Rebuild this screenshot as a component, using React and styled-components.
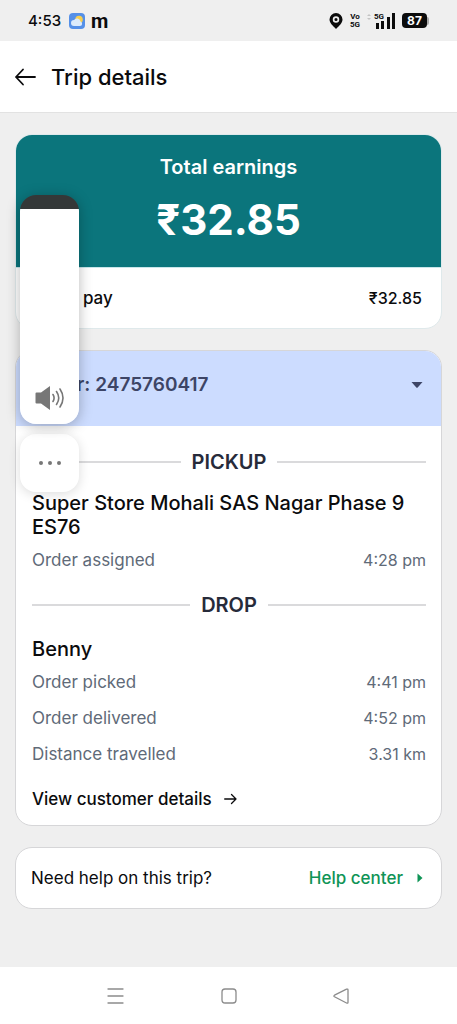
import React, { useState } from 'react';
import styled, { createGlobalStyle } from 'styled-components';

const GlobalStyle = createGlobalStyle`
    *{
        box-sizing:border-box;
    }
    body{
        margin:0;
        background:#efefef;
        font-family:Inter, "Open Sans", sans-serif;
        color:#0b0b0d;
    }
    h1, h2, h3, p, dl, dd{
        margin:0;
    }
    button{
        padding:0;
        border:none;
        background:none;
        font-family:inherit;
        color:inherit;
        cursor:pointer;
    }
    svg{
        display:block;
        flex-shrink:0;
    }
`;

const Page = styled.div`
    display:flex;
    flex-direction:column;
    min-height:100vh;
`;

const StatusBar = styled.div`
    display:flex;
    justify-content:space-between;
    align-items:center;
    height:41px;
    padding:0 28px;
`;

const StatusGroup = styled.div`
    display:flex;
    align-items:center;
    gap:${({ gap }) => gap};
`;

const Clock = styled.span`
    font-size:15px;
    font-weight:500;
    line-height:20px;
    margin-right:2px;
`;

const AppMark = styled.span`
    font-family:Roboto, sans-serif;
    font-size:20px;
    font-weight:700;
    line-height:20px;
`;

const VoLabel = styled.span`
    display:flex;
    flex-direction:column;
    align-items:center;
    font-family:Roboto, sans-serif;
    font-size:8px;
    font-weight:700;
    line-height:8px;
`;

const Signal = styled.div`
    display:flex;
    align-items:flex-end;
    gap:3px;
`;

const SignalStart = styled.div`
    display:flex;
    flex-direction:column;
    align-items:flex-end;
`;

const SignalLabel = styled.span`
    font-family:Roboto, sans-serif;
    font-size:8px;
    font-weight:700;
    line-height:8px;
`;

const Battery = styled.span`
    display:flex;
    align-items:center;
    &::after{
        content:'';
        width:2px;
        height:8px;
        border-radius:0 2px 2px 0;
        background:#aaa;
    }
`;

const BatteryLevel = styled.span`
    width:25px;
    border-radius:4px;
    background:#0c0c0c;
    color:#fff;
    font-size:12px;
    font-weight:700;
    line-height:15px;
    text-align:center;
`;

const Header = styled.header`
    display:flex;
    align-items:center;
    gap:15px;
    height:72px;
    padding:0 14px;
    background:#fff;
    border-bottom:1px solid #e2e2e2;
`;

const Title = styled.h1`
    font-size:22px;
    font-weight:500;
    line-height:28px;
`;

const Main = styled.main`
    display:flex;
    flex-direction:column;
    flex:1;
    gap:21px;
    padding:21px 15px;
`;

const Card = styled.section`
    overflow:hidden;
    background:#fff;
    border:1px solid ${({ line }) => line || '#d6d6d8'};
    border-radius:17px;
`;

const Earnings = styled.div`
    padding:18px 16px;
    height:133px;
    background:#0b757c;
    border-bottom:1px solid #c9e6ea;
    color:#fff;
    text-align:center;
`;

const EarningsTitle = styled.h2`
    font-size:20px;
    font-weight:600;
    line-height:28px;
`;

const EarningsTotal = styled.p`
    margin-top:11px;
    font-size:42px;
    font-weight:700;
    line-height:56px;
`;

const PayRow = styled.div`
    display:flex;
    justify-content:space-between;
    align-items:center;
    height:60px;
    padding:0 19px 0 16px;
    font-size:17px;
    font-weight:500;
`;

const PayAmount = styled.span`
    font-size:16px;
`;

const OrderToggle = styled.button`
    display:flex;
    justify-content:space-between;
    align-items:center;
    width:100%;
    height:75px;
    padding:0 18px 8px 16px;
    background:#ccdcff;
    color:#3d4566;
    font-size:19px;
    font-weight:600;
`;

const OrderBody = styled.div`
    padding:21px 15px 14px 16px;
`;

const Divider = styled.h3`
    display:flex;
    align-items:center;
    gap:11px;
    color:#272b3a;
    font-size:20px;
    font-weight:600;
    line-height:30px;
    &::before,
    &::after{
        content:'';
        flex:1;
        height:2px;
        background:#dadadc;
    }
`;

const Place = styled.p`
    margin-top:${({ top }) => top};
    font-size:20px;
    font-weight:500;
    line-height:24px;
`;

const Facts = styled.dl`
    margin-top:3px;
    margin-bottom:${({ bottom }) => bottom || '0'};
`;

const Fact = styled.div`
    display:flex;
    justify-content:space-between;
    color:#606a78;
    font-size:17px;
    line-height:36px;
    dd{
        font-size:16px;
    }
`;

const CustomerLink = styled.a`
    display:flex;
    align-items:center;
    gap:12px;
    margin-top:15px;
    color:inherit;
    font-size:17px;
    font-weight:500;
    line-height:24px;
    text-decoration:none;
`;

const HelpRow = styled.div`
    display:flex;
    justify-content:space-between;
    align-items:center;
    height:60px;
    padding:0 18px 0 15px;
    font-size:17px;
`;

const HelpLink = styled.a`
    display:flex;
    align-items:center;
    gap:14px;
    color:#0f9456;
    font-weight:500;
    text-decoration:none;
`;

const NavBar = styled.nav`
    display:flex;
    justify-content:center;
    align-items:center;
    gap:93px;
    height:57px;
    background:#fff;
    color:#8c8c8c;
`;

const VolumePanel = styled.aside`
    position:fixed;
    top:195px;
    left:20px;
    display:flex;
    flex-direction:column;
    gap:10px;
    width:59px;
`;

const VolumeBox = styled.label`
    position:relative;
    display:block;
    height:229px;
    overflow:hidden;
    border-radius:16px;
    box-shadow:0 2px 14px rgba(0,0,0,0.28);
    svg{
        position:absolute;
        left:15px;
        bottom:12px;
        pointer-events:none;
    }
`;

const VolumeSlider = styled.input`
    appearance:none;
    display:block;
    width:100%;
    height:100%;
    margin:0;
    writing-mode:vertical-lr;
    direction:rtl;
    cursor:pointer;
    &::-webkit-slider-thumb{
        appearance:none;
        width:59px;
        height:1px;
        background:transparent;
    }
`;

const MoreButton = styled.button`
    display:flex;
    justify-content:center;
    align-items:center;
    height:58px;
    border-radius:16px;
    background:#fff;
    color:#777;
    box-shadow:0 2px 12px rgba(0,0,0,0.14);
`;

const WeatherIcon = () => (
    <svg width="16" height="16" viewBox="0 0 16 16">
        <rect width="16" height="16" rx="4" fill="#5590e8" />
        <circle cx="10" cy="6.500" r="3.800" fill="#f8cf50" />
        <path d="M5 13a3 3 0 0 1 0-6 3.600 3.600 0 0 1 6.500 1.500A2.300 2.300 0 0 1 11 13z" fill="#dcebfb" />
    </svg>
);

const PinIcon = () => (
    <svg width="14" height="16" viewBox="0 0 14 16">
        <path d="M7 0a6.500 6.500 0 0 1 6.500 6.500C13.500 10 10 13 7 16 4 13 .5 10 .5 6.500A6.500 6.500 0 0 1 7 0z" fill="#0c0c0c" />
        <circle cx="7" cy="6.500" r="2.400" fill="#0c0c0c" stroke="#efefef" strokeWidth="1.700" />
    </svg>
);

const DataArrows = () => (
    <svg width="4" height="16" viewBox="0 0 4 16" fill="#c4c4c4">
        <path d="M0 3l2-2 2 2zM0 5h4L2 7z" />
    </svg>
);

const ShortBars = () => (
    <svg width="8" height="8" viewBox="0 0 8 8" fill="#0c0c0c">
        <rect x="0" y="2" width="3" height="6" />
        <rect x="5" y="0" width="3" height="8" />
    </svg>
);

const TallBars = () => (
    <svg width="8" height="16" viewBox="0 0 8 16" fill="#0c0c0c">
        <rect x="0" y="4" width="3" height="12" />
        <rect x="5" y="0" width="3" height="16" />
    </svg>
);

const BackIcon = () => (
    <svg width="22" height="18" viewBox="0 0 22 18" fill="none" stroke="currentColor" strokeWidth="1.800" strokeLinecap="round" strokeLinejoin="round">
        <path d="M21 9H2M9 1.500L2 9 9 16.500" />
    </svg>
);

const ForwardIcon = () => (
    <svg width="13" height="12" viewBox="0 0 13 12" fill="none" stroke="currentColor" strokeWidth="1.300" strokeLinecap="round" strokeLinejoin="round">
        <path d="M.7 6H12M7.500 1.500L12 6 7.500 10.500" />
    </svg>
);

const CaretDown = () => (
    <svg width="12" height="6" viewBox="0 0 12 6">
        <path d="M.5 0h11L6.700 5.500a1 1 0 0 1-1.400 0z" fill="currentColor" />
    </svg>
);

const CaretRight = () => (
    <svg width="6" height="10" viewBox="0 0 6 10">
        <path d="M.5.5v9L5.500 5z" fill="currentColor" />
    </svg>
);

const SpeakerIcon = () => (
    <svg width="30" height="28" viewBox="0 0 30 28" fill="none" stroke="#777" strokeWidth="1.600" strokeLinecap="round">
        <path d="M1.500 8.500h4.500L15 2v24l-9-6.500H1.500a1 1 0 0 1-1-1v-9a1 1 0 0 1 1-1z" fill="#777" stroke="none" />
        <path d="M18 10.500q2.200 3.500 0 7M21.500 7.500q4.500 6.500 0 13M25 5q6 9 0 18" />
    </svg>
);

const DotsIcon = () => (
    <svg width="24" height="6" viewBox="0 0 24 6" fill="currentColor">
        <circle cx="3" cy="3" r="2" />
        <circle cx="12" cy="3" r="2" />
        <circle cx="21" cy="3" r="2" />
    </svg>
);

const navIcons = [
    { name: 'Recent apps', d: 'M2 3h15M2 10h15M2 17h15' },
    { name: 'Home', d: 'M6 3h8a3 3 0 0 1 3 3v8a3 3 0 0 1-3 3H6a3 3 0 0 1-3-3V6a3 3 0 0 1 3-3z' },
    { name: 'Back', d: 'M2.500 9.200L14.500 3.200q1.500-.6 1.500 1v12q0 1.500-1.500.8L2.500 10.800q-1.300-.8 0-1.600z' },
];

const dropFacts = [
    { label: 'Order picked', value: '4:41 pm' },
    { label: 'Order delivered', value: '4:52 pm' },
    { label: 'Distance travelled', value: '3.31 km' },
];

const FactRow = ({ label, value }) => (
    <Fact>
        <dt>{label}</dt>
        <dd>{value}</dd>
    </Fact>
);

const Volume = () => {
    const [level, setLevel] = useState(94);

    return (
        <VolumePanel>
            <VolumeBox>
                <VolumeSlider
                    type="range"
                    aria-label="Volume"
                    value={level}
                    onChange={e => setLevel(Number(e.target.value))}
                    style={{ background: `linear-gradient(to top, #fff ${level}%, #343838 ${level}%)` }}
                />
                <SpeakerIcon />
            </VolumeBox>
            <MoreButton aria-label="More sound settings"><DotsIcon /></MoreButton>
        </VolumePanel>
    );
};

export default function App() {
    const [isOpen, setIsOpen] = useState(true);

    return (
        <Page>
            <GlobalStyle />
            <StatusBar>
                <StatusGroup gap="6px">
                    <Clock>4:53</Clock>
                    <WeatherIcon />
                    <AppMark>m</AppMark>
                </StatusGroup>
                <StatusGroup gap="7px">
                    <PinIcon />
                    <VoLabel><span>Vo</span><span>5G</span></VoLabel>
                    <Signal>
                        <DataArrows />
                        <SignalStart>
                            <SignalLabel>5G</SignalLabel>
                            <ShortBars />
                        </SignalStart>
                        <TallBars />
                    </Signal>
                    <Battery><BatteryLevel>87</BatteryLevel></Battery>
                </StatusGroup>
            </StatusBar>
            <Header>
                <button aria-label="Go back"><BackIcon /></button>
                <Title>Trip details</Title>
            </Header>
            <Main>
                <Card line="#dfe9eb">
                    <Earnings>
                        <EarningsTitle>Total earnings</EarningsTitle>
                        <EarningsTotal>₹32.85</EarningsTotal>
                    </Earnings>
                    <PayRow>
                        <span>Order pay</span>
                        <PayAmount>₹32.85</PayAmount>
                    </PayRow>
                </Card>
                <Card>
                    <OrderToggle aria-expanded={isOpen} onClick={() => setIsOpen(!isOpen)}>
                        <span>Order: 2475760417</span>
                        <CaretDown />
                    </OrderToggle>
                    {isOpen && (
                        <OrderBody>
                            <Divider>PICKUP</Divider>
                            <Place top="14px">Super Store Mohali SAS Nagar Phase 9 ES76</Place>
                            <Facts bottom="12px">
                                <FactRow label="Order assigned" value="4:28 pm" />
                            </Facts>
                            <Divider>DROP</Divider>
                            <Place top="17px">Benny</Place>
                            <Facts>
                                {dropFacts.map(item => <FactRow key={item.label} {...item} />)}
                            </Facts>
                            <CustomerLink href="#customer">View customer details <ForwardIcon /></CustomerLink>
                        </OrderBody>
                    )}
                </Card>
                <Card>
                    <HelpRow>
                        <span>Need help on this trip?</span>
                        <HelpLink href="#help">Help center <CaretRight /></HelpLink>
                    </HelpRow>
                </Card>
            </Main>
            <NavBar>
                {navIcons.map(({ name, d }) => (
                    <button key={name} aria-label={name}>
                        <svg width="20" height="20" viewBox="0 0 20 20" fill="none" stroke="currentColor" strokeWidth="1.300" strokeLinecap="round">
                            <path d={d} />
                        </svg>
                    </button>
                ))}
            </NavBar>
            <Volume />
        </Page>
    );
}
